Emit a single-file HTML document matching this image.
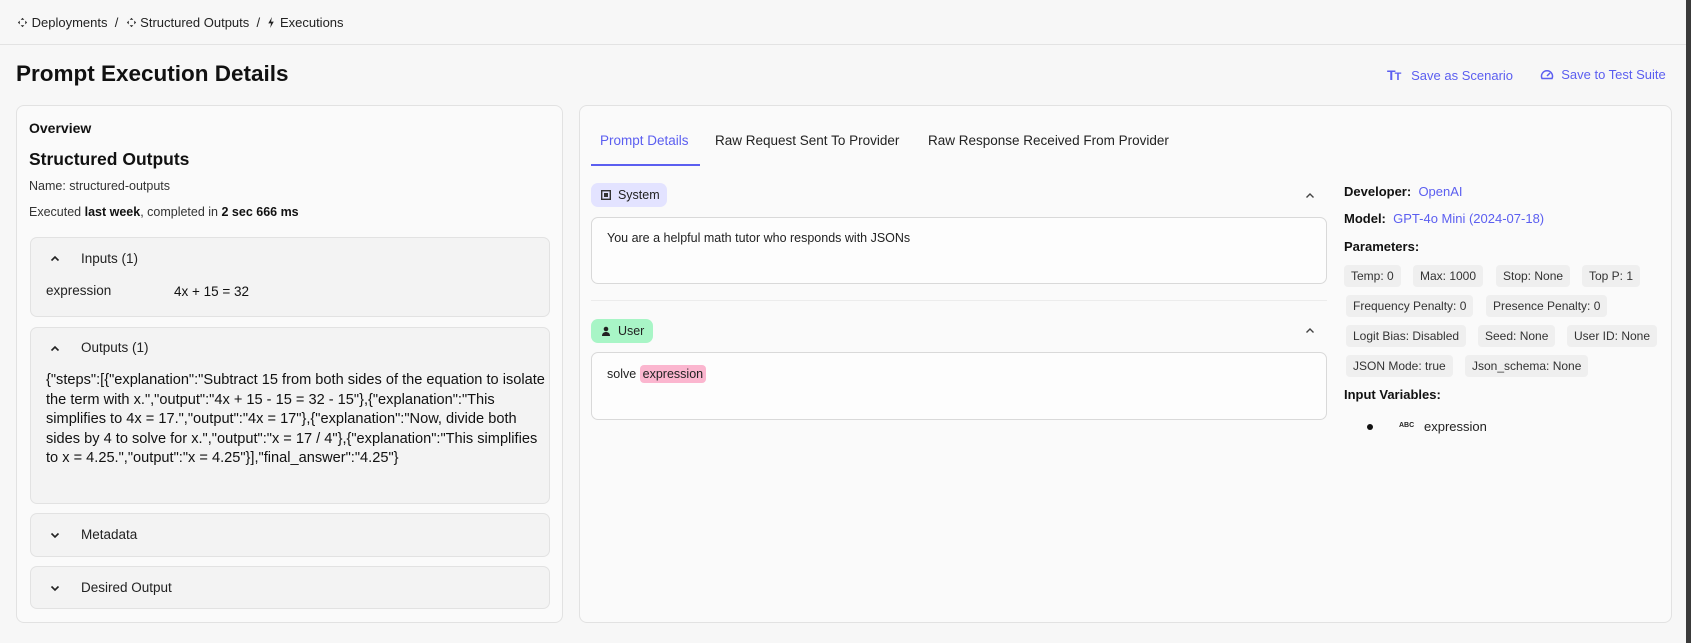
<!DOCTYPE html>
<html><head><meta charset="utf-8"><style>
*{box-sizing:border-box;margin:0;padding:0}
body{width:1691px;height:643px;overflow:hidden;background:#f7f7f7;font-family:"Liberation Sans",sans-serif;color:#111;position:relative;font-size:14px}
.a{position:absolute;white-space:nowrap}
.panel{position:absolute;background:#fafafa;border:1px solid #e2e2e2;border-radius:8px}
.box{position:absolute;background:#f3f3f3;border:1px solid #e2e2e2;border-radius:7px}
.chip{position:absolute;background:#efefef;border-radius:4px;height:22px;line-height:22px;font-size:12px;color:#333;padding:0 7px;white-space:nowrap}
.ta{position:absolute;background:#fdfdfd;border:1px solid #d9d9d9;border-radius:7px}
.blue{color:#5b5ef0}
</style></head><body>
<div class="a" style="left:17px;top:15px;font-size:13px;color:#222">
<svg width="11" height="11" viewBox="0 0 12 12" style="vertical-align:-1px"><path d="M6 1l2 2H4zM6 11l2-2H4zM1 6l2-2v4zM11 6l-2-2v4z" fill="#222"/></svg> Deployments &nbsp;/&nbsp; <svg width="11" height="11" viewBox="0 0 12 12" style="vertical-align:-1px"><path d="M6 1l2 2H4zM6 11l2-2H4zM1 6l2-2v4zM11 6l-2-2v4z" fill="#222"/></svg> Structured Outputs &nbsp;/&nbsp; <svg width="9" height="11" viewBox="0 0 9 12" style="vertical-align:-1px"><path d="M5 0L1 7h3l-1 5 4-7H4z" fill="#222"/></svg> Executions</div>
<div class="a" style="left:0;top:44px;width:1686px;height:1px;background:#e3e3e3"></div>
<div class="a" style="left:16px;top:61px;font-size:22.5px;font-weight:bold">Prompt Execution Details</div>
<div class="a blue" style="left:1387px;top:67px;font-size:13px"><b style="font-size:14px;letter-spacing:-1px">T<span style="font-size:11px">T</span></b>&nbsp;&nbsp;&nbsp;Save as Scenario</div>
<div class="a blue" style="left:1540px;top:67px;font-size:13px"><svg width="14" height="12" viewBox="0 0 14 12" style="vertical-align:-1px"><path d="M2 10.5A5.5 5.5 0 1 1 12 10.5z" fill="none" stroke="#5b5ef0" stroke-width="1.5"/><path d="M7 8l3-3" stroke="#5b5ef0" stroke-width="1.5"/></svg>&nbsp;&nbsp;Save to Test Suite</div>
<div class="a" style="left:1686px;top:0;width:5px;height:643px;background:#3a3a3a"></div>

<div class="panel" style="left:16px;top:105px;width:547px;height:518px"></div>
<div class="a" style="left:29px;top:120px;font-size:14px;font-weight:bold;color:#111">Overview</div>
<div class="a" style="left:29px;top:149px;font-size:17.5px;font-weight:bold">Structured Outputs</div>
<div class="a" style="left:29px;top:179px;font-size:12.5px;color:#333">Name: structured-outputs</div>
<div class="a" style="left:29px;top:205px;font-size:12.5px;color:#333">Executed <b style="color:#111">last week</b>, completed in <b style="color:#111">2 sec 666 ms</b></div>

<div class="box" style="left:30px;top:237px;width:520px;height:80px"></div>
<svg class="a" style="left:50px;top:255px" width="10" height="7" viewBox="0 0 10 7"><path d="M1.5 5.5L5 2l3.5 3.5" fill="none" stroke="#222" stroke-width="1.6"/></svg>
<div class="a" style="left:81px;top:251px;font-size:13.5px;color:#222">Inputs (1)</div>
<div class="a" style="left:46px;top:283px;font-size:13.5px;color:#222">expression</div>
<div class="a" style="left:174px;top:284px;font-size:13.5px;color:#111">4x + 15 = 32</div>

<div class="box" style="left:30px;top:327px;width:520px;height:177px"></div>
<svg class="a" style="left:50px;top:345px" width="10" height="7" viewBox="0 0 10 7"><path d="M1.5 5.5L5 2l3.5 3.5" fill="none" stroke="#222" stroke-width="1.6"/></svg>
<div class="a" style="left:81px;top:340px;font-size:13.5px;color:#222">Outputs (1)</div>
<div class="a" style="left:46px;top:371px;font-size:14.6px;line-height:19.6px;color:#111">{"steps":[{"explanation":"Subtract 15 from both sides of the equation to isolate<br>the term with x.","output":"4x + 15 - 15 = 32 - 15"},{"explanation":"This<br>simplifies to 4x = 17.","output":"4x = 17"},{"explanation":"Now, divide both<br>sides by 4 to solve for x.","output":"x = 17 / 4"},{"explanation":"This simplifies<br>to x = 4.25.","output":"x = 4.25"}],"final_answer":"4.25"}</div>

<div class="box" style="left:30px;top:513px;width:520px;height:44px"></div>
<svg class="a" style="left:50px;top:532px" width="10" height="7" viewBox="0 0 10 7"><path d="M1.5 1.5L5 5l3.5-3.5" fill="none" stroke="#222" stroke-width="1.6"/></svg>
<div class="a" style="left:81px;top:527px;font-size:13.5px;color:#222">Metadata</div>
<div class="box" style="left:30px;top:566px;width:520px;height:43px"></div>
<svg class="a" style="left:50px;top:585px" width="10" height="7" viewBox="0 0 10 7"><path d="M1.5 1.5L5 5l3.5-3.5" fill="none" stroke="#222" stroke-width="1.6"/></svg>
<div class="a" style="left:81px;top:580px;font-size:13.5px;color:#222">Desired Output</div>

<div class="panel" style="left:579px;top:105px;width:1093px;height:518px"></div>
<div class="a blue" style="left:600px;top:133px;font-size:13.5px">Prompt Details</div>
<div class="a" style="left:715px;top:133px;font-size:13.5px;color:#222">Raw Request Sent To Provider</div>
<div class="a" style="left:928px;top:133px;font-size:13.5px;color:#222">Raw Response Received From Provider</div>
<div class="a" style="left:591px;top:164px;width:109px;height:2px;background:#5b5ef0"></div>

<div class="a" style="left:591px;top:183px;width:76px;height:24px;border-radius:7px;background:#e3e3ff;font-size:12.5px;line-height:24px;padding-left:10px;color:#222"><svg width="10" height="10" viewBox="0 0 10 10" style="vertical-align:-1px"><rect x=".7" y=".7" width="8.6" height="8.6" fill="none" stroke="#333" stroke-width="1.4"/><rect x="3" y="3" width="4" height="4" fill="#333"/></svg>&nbsp; System</div>
<svg class="a" style="left:1305px;top:192px" width="10" height="7" viewBox="0 0 10 7"><path d="M1.5 5.5L5 2l3.5 3.5" fill="none" stroke="#444" stroke-width="1.4"/></svg>
<div class="ta" style="left:591px;top:217px;width:736px;height:67px"></div>
<div class="a" style="left:607px;top:231px;font-size:12.5px;color:#222">You are a helpful math tutor who responds with JSONs</div>
<div class="a" style="left:591px;top:300px;width:736px;height:1px;background:#ececec"></div>

<div class="a" style="left:591px;top:319px;width:62px;height:24px;border-radius:7px;background:#a8f5c6;font-size:12.5px;line-height:24px;padding-left:10px;color:#222"><svg width="10" height="10" viewBox="0 0 10 10" style="vertical-align:-1px"><circle cx="5" cy="3" r="2.3" fill="#222"/><path d="M1 10c0-3 2-4 4-4s4 1 4 4z" fill="#222"/></svg>&nbsp; User</div>
<svg class="a" style="left:1305px;top:327px" width="10" height="7" viewBox="0 0 10 7"><path d="M1.5 5.5L5 2l3.5 3.5" fill="none" stroke="#444" stroke-width="1.4"/></svg>
<div class="ta" style="left:591px;top:352px;width:736px;height:68px"></div>
<div class="a" style="left:607px;top:367px;font-size:12.5px;color:#222">solve <span style="background:#fbb6cf;border-radius:4px;padding:2px 3px">expression</span></div>

<div class="a" style="left:1344px;top:184px;font-size:13px"><b>Developer:</b>&nbsp; <span class="blue">OpenAI</span></div>
<div class="a" style="left:1344px;top:211px;font-size:13px"><b>Model:</b>&nbsp; <span class="blue">GPT-4o Mini (2024-07-18)</span></div>
<div class="a" style="left:1344px;top:239px;font-size:13px;font-weight:bold">Parameters:</div>
<div class="chip" style="left:1344px;top:265px">Temp: 0</div>
<div class="chip" style="left:1413px;top:265px">Max: 1000</div>
<div class="chip" style="left:1496px;top:265px">Stop: None</div>
<div class="chip" style="left:1582px;top:265px">Top P: 1</div>
<div class="chip" style="left:1346px;top:295px">Frequency Penalty: 0</div>
<div class="chip" style="left:1486px;top:295px">Presence Penalty: 0</div>
<div class="chip" style="left:1346px;top:325px">Logit Bias: Disabled</div>
<div class="chip" style="left:1478px;top:325px">Seed: None</div>
<div class="chip" style="left:1567px;top:325px">User ID: None</div>
<div class="chip" style="left:1346px;top:355px">JSON Mode: true</div>
<div class="chip" style="left:1465px;top:355px">Json_schema: None</div>
<div class="a" style="left:1344px;top:387px;font-size:13px;font-weight:bold">Input Variables:</div>
<div class="a" style="left:1367px;top:424px;width:6px;height:6px;border-radius:50%;background:#111"></div>
<div class="a" style="left:1399px;top:422px;font-size:7px;font-weight:bold;color:#222">ABC</div>
<div class="a" style="left:1424px;top:419px;font-size:13px;color:#222">expression</div>
</body></html>
